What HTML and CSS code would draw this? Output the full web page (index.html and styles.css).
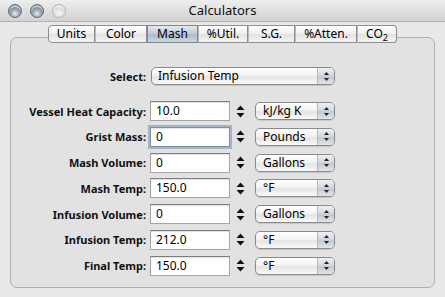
FILE: index.html
```html
<!DOCTYPE html>
<html lang="en">
<head>
    <meta charset="UTF-8">
    <title>Calculators</title>
    <link rel="stylesheet" href="styles.css">
</head>
<body>
    <div class="window">
        <div class="titlebar">
            <div class="lights">
                <span class="light"></span>
                <span class="light"></span>
                <span class="light off"></span>
            </div>
            <div class="title">Calculators</div>
            <div></div>
        </div>

        <div class="tabs">
            <span class="tab w-units">Units</span>
            <span class="tab w-color">Color</span>
            <span class="tab w-mash active">Mash</span>
            <span class="tab w-util">%Util.</span>
            <span class="tab w-sg">S.G.</span>
            <span class="tab w-atten">%Atten.</span>
            <span class="tab w-co2">CO<sub>2</sub></span>
        </div>

        <div class="panel">
            <div class="select-row">
                <label class="lbl">Select:</label>
                <div class="popup wide">
                    <span class="popup-text">Infusion Temp</span>
                    <span class="popup-arrows"><svg width="7" height="11" viewBox="0 0 7 11"><polygon points="1,4 3.5,1 6,4" fill="#222"/><polygon points="1,7 3.5,10 6,7" fill="#222"/></svg></span>
                </div>
            </div>

            <div class="fields">
                <label class="lbl">Vessel Heat Capacity:</label>
                <div class="field">10.0</div>
                <div class="stepper"><svg width="9" height="13" viewBox="0 0 9 13"><polygon points="0.5,5 4.5,0.5 8.5,5" fill="#111"/><polygon points="0.5,8 4.5,12.5 8.5,8" fill="#111"/></svg></div>
                <div class="popup"><span class="popup-text">kJ/kg K</span><span class="popup-arrows"><svg width="7" height="11" viewBox="0 0 7 11"><polygon points="1,4 3.5,1 6,4" fill="#222"/><polygon points="1,7 3.5,10 6,7" fill="#222"/></svg></span></div>

                <label class="lbl">Grist Mass:</label>
                <div class="field focused">0</div>
                <div class="stepper"><svg width="9" height="13" viewBox="0 0 9 13"><polygon points="0.5,5 4.5,0.5 8.5,5" fill="#111"/><polygon points="0.5,8 4.5,12.5 8.5,8" fill="#111"/></svg></div>
                <div class="popup"><span class="popup-text">Pounds</span><span class="popup-arrows"><svg width="7" height="11" viewBox="0 0 7 11"><polygon points="1,4 3.5,1 6,4" fill="#222"/><polygon points="1,7 3.5,10 6,7" fill="#222"/></svg></span></div>

                <label class="lbl">Mash Volume:</label>
                <div class="field">0</div>
                <div class="stepper"><svg width="9" height="13" viewBox="0 0 9 13"><polygon points="0.5,5 4.5,0.5 8.5,5" fill="#111"/><polygon points="0.5,8 4.5,12.5 8.5,8" fill="#111"/></svg></div>
                <div class="popup"><span class="popup-text">Gallons</span><span class="popup-arrows"><svg width="7" height="11" viewBox="0 0 7 11"><polygon points="1,4 3.5,1 6,4" fill="#222"/><polygon points="1,7 3.5,10 6,7" fill="#222"/></svg></span></div>

                <label class="lbl">Mash Temp:</label>
                <div class="field">150.0</div>
                <div class="stepper"><svg width="9" height="13" viewBox="0 0 9 13"><polygon points="0.5,5 4.5,0.5 8.5,5" fill="#111"/><polygon points="0.5,8 4.5,12.5 8.5,8" fill="#111"/></svg></div>
                <div class="popup"><span class="popup-text">°F</span><span class="popup-arrows"><svg width="7" height="11" viewBox="0 0 7 11"><polygon points="1,4 3.5,1 6,4" fill="#222"/><polygon points="1,7 3.5,10 6,7" fill="#222"/></svg></span></div>

                <label class="lbl">Infusion Volume:</label>
                <div class="field">0</div>
                <div class="stepper"><svg width="9" height="13" viewBox="0 0 9 13"><polygon points="0.5,5 4.5,0.5 8.5,5" fill="#111"/><polygon points="0.5,8 4.5,12.5 8.5,8" fill="#111"/></svg></div>
                <div class="popup"><span class="popup-text">Gallons</span><span class="popup-arrows"><svg width="7" height="11" viewBox="0 0 7 11"><polygon points="1,4 3.5,1 6,4" fill="#222"/><polygon points="1,7 3.5,10 6,7" fill="#222"/></svg></span></div>

                <label class="lbl">Infusion Temp:</label>
                <div class="field">212.0</div>
                <div class="stepper"><svg width="9" height="13" viewBox="0 0 9 13"><polygon points="0.5,5 4.5,0.5 8.5,5" fill="#111"/><polygon points="0.5,8 4.5,12.5 8.5,8" fill="#111"/></svg></div>
                <div class="popup"><span class="popup-text">°F</span><span class="popup-arrows"><svg width="7" height="11" viewBox="0 0 7 11"><polygon points="1,4 3.5,1 6,4" fill="#222"/><polygon points="1,7 3.5,10 6,7" fill="#222"/></svg></span></div>

                <label class="lbl">Final Temp:</label>
                <div class="field">150.0</div>
                <div class="stepper"><svg width="9" height="13" viewBox="0 0 9 13"><polygon points="0.5,5 4.5,0.5 8.5,5" fill="#111"/><polygon points="0.5,8 4.5,12.5 8.5,8" fill="#111"/></svg></div>
                <div class="popup"><span class="popup-text">°F</span><span class="popup-arrows"><svg width="7" height="11" viewBox="0 0 7 11"><polygon points="1,4 3.5,1 6,4" fill="#222"/><polygon points="1,7 3.5,10 6,7" fill="#222"/></svg></span></div>
            </div>
        </div>
    </div>
</body>
</html>
```

FILE: styles.css
```css
body {
    margin: 0;
    font-family: "Noto Sans", "DejaVu Sans", sans-serif;
    background-color: #e8e8e8;
    color: #000;
}
.window {
    width: 445px;
    height: 297px;
    overflow: hidden;
    background-color: #e8e8e8;
}
.titlebar {
    height: 21px;
    display: grid;
    grid-template-columns: 1fr auto 1fr;
    align-items: center;
    background: linear-gradient(#eeeeee, #d2d2d2);
    border-bottom: 1px solid #b3b3b3;
}
.lights {
    display: flex;
    gap: 8px;
    padding-left: 8px;
}
.light {
    width: 12px;
    height: 12px;
    border-radius: 50%;
    border: 1px solid #5e6873;
    background: radial-gradient(circle at 50% 72%, #e8eef3 0, #a3aeb9 35%, #6a7682 75%, #515b66 100%);
    box-shadow: inset 0 2px 1px rgba(255, 255, 255, 0.65);
}
.light.off {
    border-color: #b4b4b4;
    background: radial-gradient(circle at 50% 70%, #f6f6f6 0, #dedede 50%, #c6c6c6 100%);
}
.title {
    font-size: 13px;
    line-height: 21px;
    color: #111;
}
.tabs {
    display: flex;
    justify-content: center;
    margin-top: 3px;
    position: relative;
    z-index: 1;
}
.tab {
    box-sizing: border-box;
    height: 18px;
    font-size: 12px;
    line-height: 16px;
    text-align: center;
    border: 1px solid #8e8e8e;
    border-left: 1px solid #b9b9b9;
    background: linear-gradient(#ffffff, #f1f1f1 45%, #e2e2e2 55%, #f4f4f4);
}
.tab:first-child {
    border-left-color: #8e8e8e;
    border-radius: 4px 0 0 4px;
}
.tab:last-child {
    border-radius: 0 4px 4px 0;
}
.tab.active {
    background: linear-gradient(#e3e9ef, #c3ceda 45%, #aebccb 55%, #cdd7e2);
    border-color: #7d8794;
}
.tab sub {
    font-size: 9px;
    line-height: 0;
}
.w-units { width: 47px; }
.w-color { width: 52px; }
.w-mash { width: 51px; }
.w-util { width: 50px; }
.w-sg { width: 47px; }
.w-atten { width: 62px; }
.w-co2 { width: 40px; }

.panel {
    margin: -6px 10px 0 10px;
    height: 251px;
    box-sizing: border-box;
    padding-top: 29px;
    background-color: #e2e2e2;
    border: 1px solid #b0b0b0;
    border-radius: 7px;
}
.select-row,
.fields {
    display: grid;
    grid-template-columns: 139px 86px 19px 80px;
    align-items: center;
}
.select-row {
    height: 18px;
}
.fields {
    margin-top: 16px;
    grid-auto-rows: 20px;
    row-gap: 5.8px;
}
.lbl {
    font-size: 11px;
    font-weight: bold;
    text-align: right;
    padding-right: 4px;
    color: #111;
}
.field {
    box-sizing: border-box;
    width: 80px;
    height: 20px;
    padding-left: 5px;
    font-size: 12px;
    line-height: 18px;
    background-color: #fff;
    border: 1px solid #a5a5a5;
    border-top-color: #7c7c7c;
    box-shadow: inset 0 1px 1px rgba(0, 0, 0, 0.12);
}
.field.focused {
    border-color: #7f91a6;
    box-shadow: 0 0 0 2px #a6b4c5, inset 0 1px 1px rgba(0, 0, 0, 0.12);
}
.stepper {
    display: flex;
    align-items: center;
    height: 20px;
}
.popup {
    box-sizing: border-box;
    width: 80px;
    height: 18px;
    display: flex;
    align-items: stretch;
    border: 1px solid #8a8a8a;
    border-radius: 5px;
    background: linear-gradient(#ffffff, #f3f3f3 45%, #e4e4e4 55%, #fafafa);
    box-shadow: 0 1px 1px rgba(0, 0, 0, 0.12);
    overflow: hidden;
}
.popup.wide {
    grid-column: 2 / 5;
    width: 184px;
    margin-left: 1px;
}
.popup-text {
    flex: 1;
    padding-left: 7px;
    font-size: 12px;
    line-height: 15px;
    white-space: nowrap;
}
.popup.wide .popup-text {
    padding-left: 6px;
}
.popup-arrows {
    width: 16px;
    display: flex;
    align-items: center;
    justify-content: center;
    border-left: 1px solid #b9b9b9;
    background: linear-gradient(#eef1f4, #d3d9df 45%, #c2c9d1 55%, #e1e6eb);
}
```
